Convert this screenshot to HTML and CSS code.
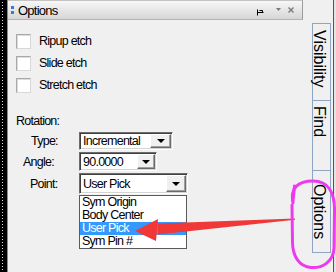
FILE: index.html
```html
<!DOCTYPE html>
<html>
<head>
<meta charset="utf-8">
<link rel="stylesheet" href="styles.css">
</head>
<body>
<div class="screen">
  <div class="strip"><span class="dots"></span></div>
  <div class="panel">
    <div class="titlebar">
      <span class="grip"></span>
      <span class="title">Options</span>
      <span class="tb-icons">
        <svg class="pin" width="7" height="7" viewBox="0 0 7 7"><path d="M0.5 0.5V6.5M0.5 3.5H6.5M2.5 1.5H5.5V3.5" fill="none" stroke="#000" stroke-width="1"/></svg>
        <svg class="tri" width="5" height="3" viewBox="0 0 5 3"><path d="M0 0H5L2.5 3Z" fill="#7a7a7a"/></svg>
        <svg class="close" width="6" height="6" viewBox="0 0 6 6"><path d="M0.5 0.5L5.5 5.5M5.5 0.5L0.5 5.5" stroke="#7a7a7a" stroke-width="1.4"/></svg>
      </span>
    </div>
    <div class="content">
      <div class="check"><span class="box"></span><span>Ripup etch</span></div>
      <div class="check"><span class="box"></span><span>Slide etch</span></div>
      <div class="check"><span class="box"></span><span>Stretch etch</span></div>
      <div class="section">Rotation:</div>
      <div class="frow r1">
        <span class="lbl l-type">Type:</span>
        <div class="combo c-type"><span>Incremental</span><span class="btn"><span class="arr"></span></span></div>
      </div>
      <div class="frow r2">
        <span class="lbl l-angle">Angle:</span>
        <div class="combo c-angle"><span>90.0000</span><span class="btn"><span class="arr"></span></span></div>
      </div>
      <div class="frow r3">
        <span class="lbl l-point">Point:</span>
        <div class="combo c-point"><span>User Pick</span><span class="btn"><span class="arr"></span></span>
          <ul class="list">
            <li>Sym Origin</li>
            <li>Body Center</li>
            <li class="sel">User Pick</li>
            <li>Sym Pin #</li>
          </ul>
        </div>
      </div>
    </div>
  </div>
  <div class="tabs">
    <div class="tab t-vis">Visibility</div>
    <div class="tab t-find">Find</div>
    <div class="tab t-opt">Options</div>
  </div>
  <div class="edge"></div>
  <svg class="annot" width="336" height="272" viewBox="0 0 336 272">
    <path d="M295 218.4 L295 219.8 L158 234.5 L158 223.5 Z" fill="#f03838"/>
    <path d="M135 231 L158 219 L156 241 Z" fill="#f03838"/>
    <path d="M293 203 C290 188 298 181 313 181 C328 181 335 192 334.5 212 L334 248 C333.5 262 322 268.5 311 267.5 C299 266.5 292.5 256 292.5 242 L292 205" fill="none" stroke="#ee3aee" stroke-width="3" stroke-linecap="round"/>
    <path d="M294.5 186 L293 201" fill="none" stroke="#ee3aee" stroke-width="3" stroke-linecap="round"/>
  </svg>
</div>
</body>
</html>
```
FILE: styles.css
```css
* { box-sizing: border-box; margin: 0; padding: 0; }
html, body { width: 336px; height: 272px; overflow: hidden; }
body {
  font-family: "Liberation Sans", Arial, sans-serif;
  font-size: 12.5px;
  letter-spacing: -0.75px;
  color: #000;
  background: #f0f0f0;
}
.screen { position: relative; display: flex; width: 336px; height: 272px; }

.strip {
  flex: 0 0 8px;
  background: #000;
  border-right: 1px solid #8a8a8a;
  padding-left: 2px;
  display: flex;
}
.dots {
  width: 1px;
  height: 100%;
  background: repeating-linear-gradient(to bottom, #000 0 2px, #d8d8d8 2px 3px);
}

.panel { flex: 0 0 295px; display: flex; flex-direction: column; }
.titlebar {
  height: 20px;
  display: flex;
  align-items: center;
  background: linear-gradient(to bottom, #f7f7f7, #d6d6d6);
  border-top: 1px solid #c4c4c4;
  border-right: 1px solid #9c9c9c;
  border-bottom: 1px solid #b4b4b4;
  padding-left: 3px;
}
.grip {
  width: 3px;
  height: 8px;
  margin-top: -1px;
  background: repeating-linear-gradient(to bottom, #2f7fd8 0 3px, transparent 3px 5px);
}
.title { margin-left: 4px; font-size: 13px; }
.tb-icons {
  margin-left: auto;
  display: flex;
  align-items: center;
  padding-right: 8px;
}
.pin { margin-top: 4px; }
.tri { margin-left: 12px; margin-top: -1px; }
.close { margin-left: 7px; margin-top: -1px; }

.content { padding: 10px 0 0 8px; }
.check { display: flex; align-items: center; height: 22px; gap: 8px; }
.box {
  width: 15px;
  height: 15px;
  background: #fff;
  border: 1px solid #a8a8a8;
  border-right-color: #d8d8d8;
  border-bottom-color: #d8d8d8;
  box-shadow: inset 1px 1px 0 #dcdcdc;
}
.section { margin-top: 18px; line-height: 14px; }

.frow { display: flex; align-items: center; }
.r1 { margin-top: 4px; height: 18px; }
.r2 { margin-top: 2px; height: 19px; }
.r3 { margin-top: 2px; height: 21px; }
.lbl { flex: 0 0 63px; }
.l-type { padding-left: 15px; }
.l-angle { padding-left: 7px; }
.l-point { padding-left: 14px; }

.combo {
  position: relative;
  height: 100%;
  display: flex;
  align-items: center;
  background: #fff;
  border: 1px solid;
  border-color: #6c6c6c #ffffff #ffffff #6c6c6c;
  box-shadow: inset 1px 1px 0 #404040, inset -1px -1px 0 #d4d4d4;
  padding: 1px 1px 1px 3px;
}
.c-type { width: 94px; }
.c-angle { width: 78px; }
.c-point { width: 109px; }
.btn {
  margin-left: auto;
  height: 100%;
  display: flex;
  align-items: center;
  justify-content: center;
  background: #f0f0f0;
  border: 1px solid;
  border-color: #ffffff #6a6a6a #6a6a6a #ffffff;
  box-shadow: inset -1px -1px 0 #a0a0a0;
}
.c-type .btn { width: 21px; }
.c-angle .btn { width: 18px; }
.c-point .btn { width: 20px; }
.arr {
  width: 0;
  height: 0;
  border-left: 4px solid transparent;
  border-right: 4px solid transparent;
  border-top: 4px solid #000;
}

.list {
  position: absolute;
  top: calc(100% + 2px);
  left: -1px;
  width: 108px;
  list-style: none;
  background: #fff;
  border: 1px solid #5a5a5a;
}
.list li { height: 13px; line-height: 13px; padding-left: 2px; }
.list li.sel { background: #3399ff; color: #fff; }

.tabs { flex: 0 0 30px; padding: 23px 2px 0 9px; display: flex; flex-direction: column; }
.tab {
  writing-mode: vertical-rl;
  font-size: 16px;
  letter-spacing: 0;
  width: 19px;
  line-height: 17px;
  border: 1px solid #8fa5c2;
  border-bottom: none;
  padding-right: 2px;
}
.t-vis { height: 77px; padding-top: 6px; }
.t-find { height: 70px; padding-top: 5px; }
.t-opt { height: 83px; padding-top: 13px; border-bottom: 1px solid #8fa5c2; }

.edge { flex: 0 0 3px; border-left: 1px solid #555; background: #e4e4e4; }

.annot { position: absolute; left: 0; top: 0; pointer-events: none; }
```
